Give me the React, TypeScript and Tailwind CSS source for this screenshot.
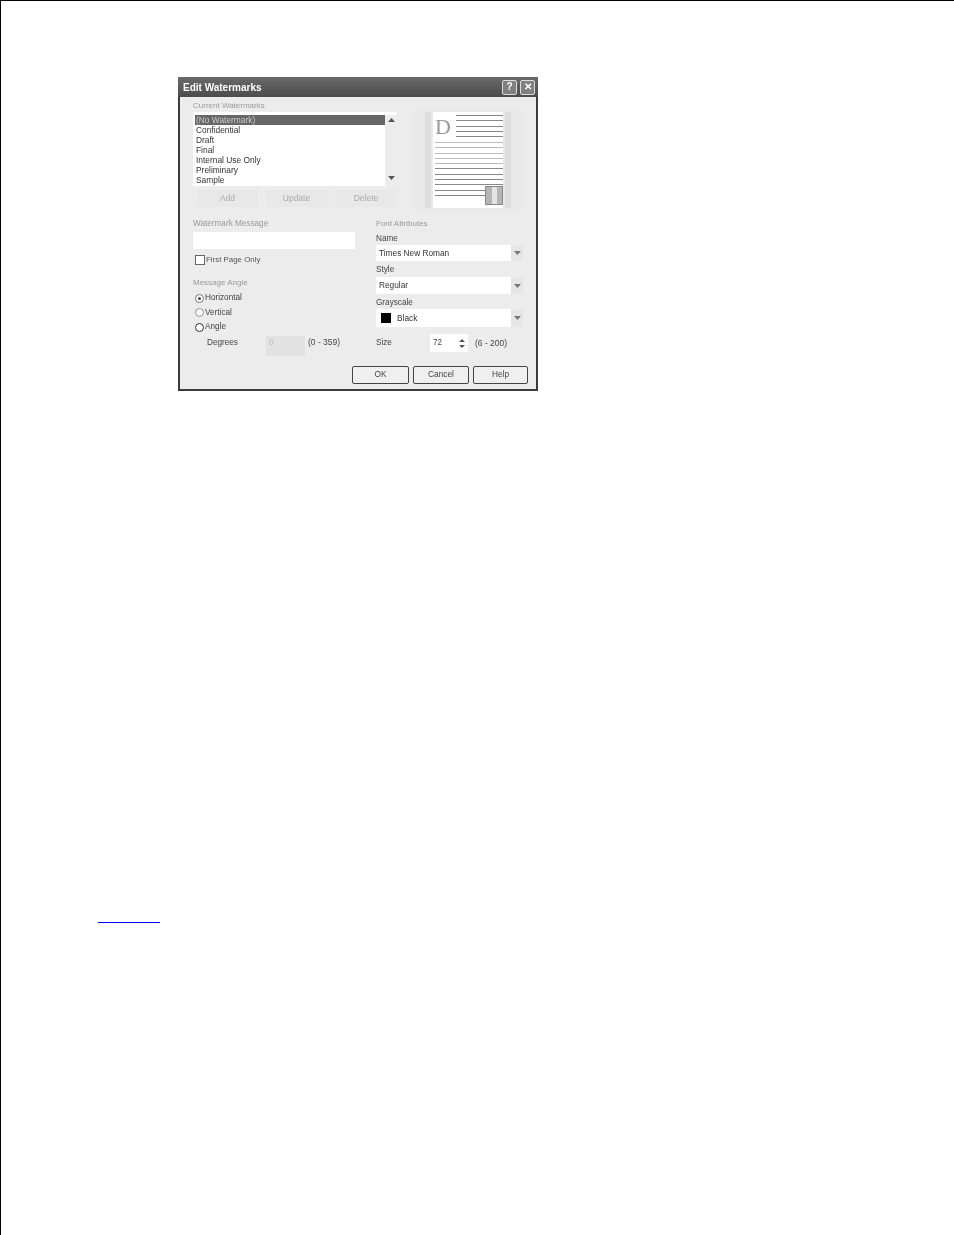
import React from "react";

const font = "[font-family:'Liberation_Sans',Arial,sans-serif]";

function Arrow() {
  return (
    <div className="flex h-full w-[12px] items-center justify-center bg-[#e6e6e6]">
      <svg width="7" height="4" viewBox="0 0 7 4"><path d="M0 0h7L3.5 4z" fill="#777" /></svg>
    </div>
  );
}

function Select({ h, mt, children }: { h: string; mt: string; children: React.ReactNode }) {
  return (
    <div className={`flex w-[147px] items-center justify-between bg-white pl-[3px] ${h} ${mt}`}>
      <div className="flex items-center text-[8.3px] leading-none text-[#333]">{children}</div>
      <Arrow />
    </div>
  );
}

function FakeButton({ label, w, cls }: { label: string; w: string; cls?: string }) {
  return (
    <div className={`flex h-[18px] items-center justify-center rounded-[2px] border border-[#444] bg-[#efefef] text-[8.3px] text-[#444] ${w} ${cls ?? ""}`}>
      {label}
    </div>
  );
}

function Row({ label, mark }: { label: string; mark: React.ReactNode }) {
  return (
    <div className="flex h-[14.5px] items-center gap-[1px] text-[8.2px] leading-none text-[#444]">
      {mark}
      <span>{label}</span>
    </div>
  );
}

const Circle = ({ dark }: { dark?: boolean }) => (
  <span className={`inline-block h-[9px] w-[9px] rounded-full border ${dark ? "border-[#333] bg-white" : "border-[#999] bg-[#f5f5f5]"}`} />
);

function Preview() {
  const top = [0, 1, 2, 3, 4];
  const lower = [0, 1, 2, 3, 4, 5, 6, 7, 8, 9, 10];
  return (
    <div className="ml-[16px] mt-[9px] flex h-[100px] w-[110px] items-center justify-center gap-[2px] bg-[#e9e9e9]">
      <div className="h-[96px] w-[6px] bg-[#dedede]" />
      <div className="relative flex h-[96px] w-[70px] flex-col bg-white pl-[2px] pt-[3px]">
        <div className="flex h-[27px] gap-[5px]">
          <span className="w-[16px] font-['Liberation_Serif',serif] text-[22px] leading-[24px] text-[#999]">D</span>
          <div className="flex flex-1 flex-col gap-[4.3px]">
            {top.map((i) => <div key={i} className="h-px bg-[#888]" />)}
          </div>
        </div>
        <div className="flex flex-1 flex-col gap-[4.3px]">
          {lower.map((i) => <div key={i} className={`h-px ${i < 5 ? "bg-[#bbb]" : "bg-[#888]"}`} />)}
        </div>
        <div className="absolute bottom-[3px] right-0 flex h-[19px] w-[18px] border border-[#888] bg-[#b5b5b5]">
          <div className="ml-[6px] h-full w-[5px] bg-[#e4e4e4]" />
        </div>
      </div>
      <div className="h-[96px] w-[6px] bg-[#dedede]" />
    </div>
  );
}

export default function App() {
  const items = ["Confidential", "Draft", "Final", "Internal Use Only", "Preliminary", "Sample"];
  return (
    <div className={`h-[1235px] w-[954px] border-l border-t border-black bg-white ${font}`}>
      <div className="pl-[177px] pt-[76px]">
        <div className="flex h-[314px] w-[360px] flex-col border-2 border-t-0 border-[#3c3c3c] bg-[#ececec] blur-[0.7px]">
          {/* Title bar */}
          <div className="-mx-[2px] flex h-[20px] shrink-0 items-center justify-between bg-gradient-to-b from-[#6a6a6a] to-[#4c4c4c] pl-[5px] pr-[3px]">
            <span className="text-[10px] font-bold text-white">Edit Watermarks</span>
            <div className="flex gap-[3px]">
              <div className="flex h-[15px] w-[15px] items-center justify-center rounded-[2px] border border-[#ddd] bg-[#808080] text-[10px] font-bold leading-none text-white">?</div>
              <div className="flex h-[15px] w-[15px] items-center justify-center rounded-[2px] border border-[#ddd] bg-[#808080] text-[10px] font-bold leading-none text-white">✕</div>
            </div>
          </div>

          {/* Upper section */}
          <div className="flex pl-[13px] pt-[4px]">
            <div className="w-[204px]">
              <div className="h-[11px] text-[8px] leading-[10px] text-[#999]">Current Watermarks</div>
              <div className="flex h-[74px] bg-white pl-[2px] pt-[3px]">
                <div className="flex-1 text-[8.4px] leading-[10px] text-[#333]">
                  <div className="h-[10px] bg-[#666] pl-[1px] text-[#ccc]">(No Watermark)</div>
                  {items.map((t) => <div key={t} className="h-[10px] pl-[1px]">{t}</div>)}
                </div>
                <div className="flex w-[12px] flex-col items-center justify-between bg-[#ececec] pb-[6px] pt-[3px]">
                  <svg width="7" height="4" viewBox="0 0 7 4"><path d="M0 4h7L3.5 0z" fill="#555" /></svg>
                  <svg width="7" height="4" viewBox="0 0 7 4"><path d="M0 0h7L3.5 4z" fill="#555" /></svg>
                </div>
              </div>
              <div className="mt-[4px] flex justify-between pl-[4px] text-[8.5px] text-[#aaa]">
                <div className="flex h-[17px] w-[61px] items-center justify-center bg-[#e8e8e8]">Add</div>
                <div className="flex h-[17px] w-[62px] items-center justify-center bg-[#e8e8e8]">Update</div>
                <div className="flex h-[17px] w-[62px] items-center justify-center bg-[#e8e8e8]">Delete</div>
              </div>
            </div>
            <Preview />
          </div>

          {/* Middle section */}
          <div className="mt-[9px] flex pl-[13px]">
            <div className="w-[183px]">
              <div className="h-[10px] text-[8.2px] leading-[10px] text-[#999]">Watermark Message</div>
              <div className="mt-[3px] h-[17px] w-[162px] bg-white" />
              <div className="mt-[5px] flex h-[12px] items-center gap-[1px] pl-[2px] text-[7.9px] text-[#555]">
                <span className="h-[10px] w-[10px] border border-[#666] bg-white" />
                <span>First Page Only</span>
              </div>
              <div className="mt-[12px] h-[10px] text-[8px] leading-[10px] text-[#999]">Message Angle</div>
              <div className="mt-[3px] pl-[2px]">
                <Row label="Horizontal" mark={<span className="flex h-[9px] w-[9px] items-center justify-center rounded-full border border-[#777] bg-white"><span className="h-[3px] w-[3px] rounded-full bg-[#444]" /></span>} />
                <Row label="Vertical" mark={<Circle />} />
                <Row label="Angle" mark={<Circle dark />} />
              </div>
              <div className="mt-[1px] flex items-start pl-[14px] text-[8.2px] leading-[13px] text-[#444]">
                <span className="w-[59px]">Degrees</span>
                <div className="flex h-[20px] w-[39px] items-start bg-[#e2e2e2] pl-[3px] text-[8.2px] text-[#bbb]">0</div>
                <span className="ml-[3px] text-[8.5px]">(0 - 359)</span>
              </div>
            </div>
            <div className="w-[150px]">
              <div className="h-[10px] text-[8px] leading-[10px] text-[#999]">Font Attributes</div>
              <div className="mt-[5px] h-[10px] text-[8.2px] leading-[10px] text-[#444]">Name</div>
              <Select h="h-[16px]" mt="mt-[1px]">Times New Roman</Select>
              <div className="mt-[4px] h-[10px] text-[8.2px] leading-[10px] text-[#444]">Style</div>
              <Select h="h-[17px]" mt="mt-[2px]">Regular</Select>
              <div className="mt-[4px] h-[10px] text-[8.2px] leading-[10px] text-[#444]">Grayscale</div>
              <Select h="h-[18px]" mt="mt-[1px]">
                <span className="ml-[2px] mr-[6px] h-[10px] w-[10px] bg-black" />Black
              </Select>
              <div className="mt-[7px] flex items-center text-[8.2px] text-[#444]">
                <span className="w-[54px]">Size</span>
                <div className="flex h-[18px] w-[38px] items-center justify-between bg-white pl-[3px] pr-[3px] text-[8.2px]">
                  <span>72</span>
                  <div className="flex flex-col gap-[3px]">
                    <svg width="6" height="3" viewBox="0 0 6 3"><path d="M0 3h6L3 0z" fill="#555" /></svg>
                    <svg width="6" height="3" viewBox="0 0 6 3"><path d="M0 0h6L3 3z" fill="#555" /></svg>
                  </div>
                </div>
                <span className="ml-[7px] text-[8.5px]">(6 - 200)</span>
              </div>
            </div>
          </div>

          {/* Footer buttons */}
          <div className="mt-[10px] flex justify-end gap-[4px] pr-[8px]">
            <FakeButton label="OK" w="w-[57px]" cls="border-[1.5px]" />
            <FakeButton label="Cancel" w="w-[56px]" />
            <FakeButton label="Help" w="w-[55px]" />
          </div>
        </div>
      </div>
      <div className="ml-[97px] mt-[531px] h-px w-[62px] bg-[#0000ff]" />
    </div>
  );
}
